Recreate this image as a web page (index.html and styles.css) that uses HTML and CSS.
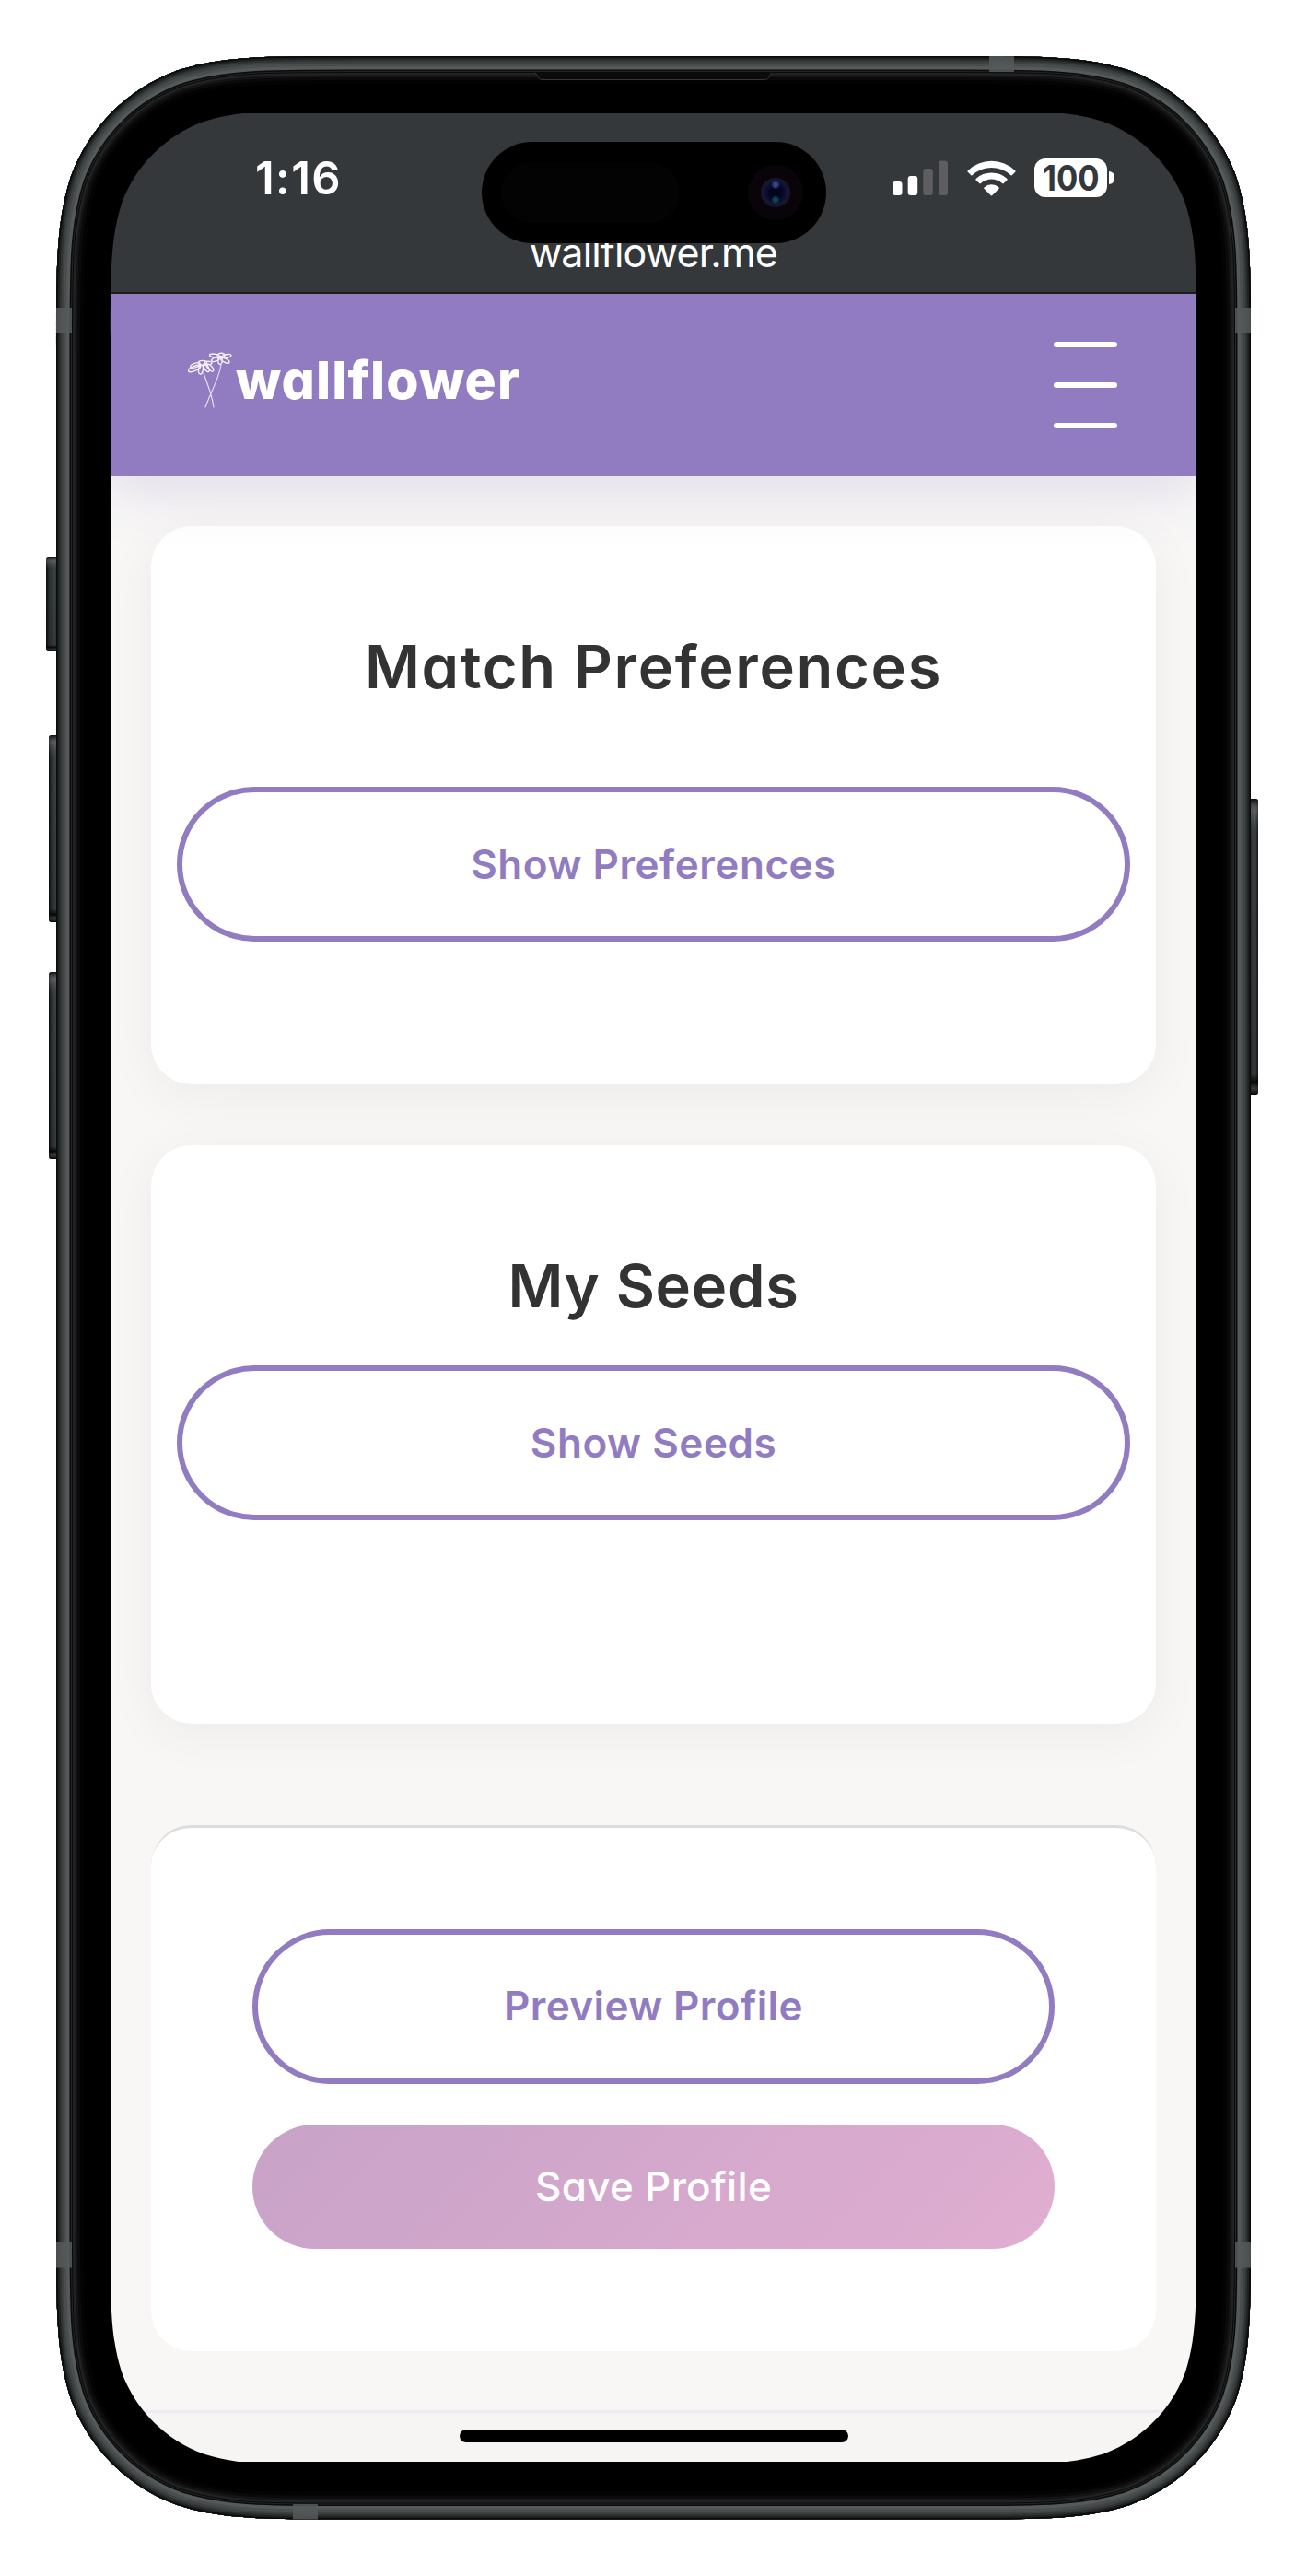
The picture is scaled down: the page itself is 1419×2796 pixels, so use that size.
FILE: index.html
```html
<!DOCTYPE html>
<html lang="en">
<head>
<meta charset="utf-8">
<title>wallflower</title>
<link rel="stylesheet" href="styles.css">
</head>
<body>
<div class="device">
  <div class="screen">
    <div class="status">
      <div class="status-row">
        <span class="time">1:16</span>
        <div class="indicators">
          <svg class="signal" width="60" height="38" viewBox="0 0 60 38">
            <g fill="#fff"><rect y="23" width="10.5" height="15" rx="3"/><rect x="16.7" y="17" width="10.5" height="21" rx="3"/></g>
            <g fill="#5e5e60"><rect x="33.3" y="9" width="10.5" height="29" rx="3"/><rect x="50" y="0.5" width="10" height="37.5" rx="3"/></g>
          </svg>
          <svg class="wifi" width="53" height="39" viewBox="0 0 53 39" fill="#fff">
            <path d="M.8 11.2A37 37 0 0 1 52.2 11.2Q53 12 52.2 12.8L48.7 16.2Q48 16.9 47.2 16.1A30.2 30.2 0 0 0 5.8 16.1Q5 16.9 4.3 16.2L.8 12.8Q0 12 .8 11.2Z"/>
            <path d="M9.6 20.1A24.6 24.6 0 0 1 43.4 20.1Q44.1 20.9 43.4 21.6L39.7 25.1Q38.9 25.8 38.1 25A17.2 17.2 0 0 0 14.9 25Q14.1 25.8 13.3 25.1L9.6 21.6Q8.9 20.9 9.6 20.1Z"/>
            <path d="M18.4 29.4A12.3 12.3 0 0 1 34.6 29.4Q35.2 30.1 34.6 30.8L27.4 38Q26.5 38.9 25.6 38L18.4 30.8Q17.8 30.1 18.4 29.4Z"/>
          </svg>
          <div class="battery"><span class="battery-level">100</span></div>
        </div>
      </div>
      <div class="address"><span>wallflower.me</span></div>
      <div class="island"><i class="sensor"></i><i class="camera"></i></div>
    </div>
    <header class="navbar">
      <div class="logo">
        <svg class="flowers" width="48" height="62" viewBox="0 0 48 62" fill="none" stroke="#fff" stroke-width="1.2" stroke-linecap="round">
          <g opacity=".75"><path d="M17 23C21 35 26 45 28 60M36 14C33 31 25 43 19 60"/></g>
          <g stroke-width="1.4" opacity=".9">
            <ellipse cx="7" cy="18" rx="7" ry="2.6" transform="rotate(-22 7 18)"/>
            <ellipse cx="8" cy="14.500" rx="5.500" ry="2.200" transform="rotate(-18 8 14.500)"/>
            <ellipse cx="14" cy="19" rx="2.400" ry="5" transform="rotate(8 14 19)"/>
            <ellipse cx="20" cy="17" rx="2.200" ry="5" transform="rotate(-30 20 17)"/>
            <ellipse cx="24" cy="17" rx="2.200" ry="5" transform="rotate(-42 24 17)"/>
            <ellipse cx="16" cy="12" rx="4.500" ry="2.600"/>
            <ellipse cx="22" cy="12" rx="4" ry="1.800"/>
            <ellipse cx="29" cy="4" rx="5.500" ry="1.800" transform="rotate(8 29 4)"/>
            <ellipse cx="30" cy="8" rx="4.500" ry="2" transform="rotate(-20 30 8)"/>
            <ellipse cx="35" cy="9" rx="2.200" ry="4.500"/>
            <ellipse cx="40" cy="9" rx="5.500" ry="2" transform="rotate(28 40 9)"/>
            <ellipse cx="42" cy="4.500" rx="5" ry="1.800" transform="rotate(-12 42 4.500)"/>
            <ellipse cx="36" cy="4" rx="4" ry="2.800"/>
          </g>
        </svg>
        <span class="wordmark">wallflower</span>
      </div>
      <div class="menu"><i></i><i></i><i></i></div>
    </header>
    <main class="content">
      <section class="card preferences">
        <h2>Match Preferences</h2>
        <a class="btn outline">Show Preferences</a>
      </section>
      <section class="card seeds">
        <h2>My Seeds</h2>
        <a class="btn outline">Show Seeds</a>
      </section>
      <section class="card actions">
        <a class="btn outline">Preview Profile</a>
        <a class="btn primary">Save Profile</a>
      </section>
    </main>
    <footer class="footer"><div class="home"></div></footer>
  </div>
  <svg class="frame" width="1419" height="2796" viewBox="0 0 1419 2796">
    <defs>
      <linearGradient id="key" x1="0" y1="0" x2="1" y2="0"><stop offset="0" stop-color="#0a0c0c"/><stop offset=".25" stop-color="#303536"/><stop offset=".7" stop-color="#43494a"/><stop offset="1" stop-color="#141717"/></linearGradient>
      <linearGradient id="keyshade" x1="0" y1="0" x2="0" y2="1"><stop offset="0" stop-color="#000" stop-opacity=".8"/><stop offset=".04" stop-color="#8a9292" stop-opacity=".35"/><stop offset=".14" stop-color="#000" stop-opacity=".1"/><stop offset=".93" stop-color="#000" stop-opacity=".2"/><stop offset=".96" stop-color="#000" stop-opacity=".9"/><stop offset=".98" stop-color="#333" stop-opacity=".6"/><stop offset="1" stop-color="#000"/></linearGradient>
      <path id="outer" d="M379 61H1040C1131.600 61 1177.400 61 1226.600 76.600C1280.500 96.200 1322.800 138.500 1342.400 192.400C1358 241.600 1358 287.400 1358 379V2416.600C1358 2508.200 1358 2554 1342.400 2603.200C1322.800 2657.100 1280.500 2699.400 1226.600 2719C1177.400 2734.600 1131.600 2734.600 1040 2734.600H379C287.400 2734.600 241.600 2734.600 192.400 2719C138.500 2699.400 96.200 2657.100 76.600 2603.200C61 2554 61 2508.200 61 2416.600V379C61 287.400 61 241.600 76.600 192.400C96.200 138.500 138.500 96.200 192.400 76.600C241.600 61 287.400 61 379 61Z"/>
      <clipPath id="body"><use href="#outer"/></clipPath>
    </defs>
    <g fill="url(#key)"><rect x="50" y="605" width="14" height="102" rx="3"/><rect x="53" y="798" width="11" height="203" rx="3"/><rect x="53" y="1055" width="11" height="203" rx="3"/><rect x="1355" y="867" width="11" height="321" rx="3"/></g>
    <g fill="url(#keyshade)"><rect x="50" y="605" width="14" height="102" rx="3"/><rect x="53" y="798" width="11" height="203" rx="3"/><rect x="53" y="1055" width="11" height="203" rx="3"/><rect x="1355" y="867" width="11" height="321" rx="3"/></g>
    <path class="bezel" fill-rule="evenodd" d="M379 61H1040C1131.600 61 1177.400 61 1226.600 76.600C1280.500 96.200 1322.800 138.500 1342.400 192.400C1358 241.600 1358 287.400 1358 379V2416.600C1358 2508.200 1358 2554 1342.400 2603.200C1322.800 2657.100 1280.500 2699.400 1226.600 2719C1177.400 2734.600 1131.600 2734.600 1040 2734.600H379C287.400 2734.600 241.600 2734.600 192.400 2719C138.500 2699.400 96.200 2657.100 76.600 2603.200C61 2554 61 2508.200 61 2416.600V379C61 287.400 61 241.600 76.600 192.400C96.200 138.500 138.500 96.200 192.400 76.600C241.600 61 287.400 61 379 61ZM364.600 120H1054.400C1124.800 120 1160 120 1198 132C1239.300 147.100 1271.900 179.700 1287 221C1299 259 1299 294.200 1299 364.600V2430.900C1299 2501.300 1299 2536.500 1287 2574.500C1271.900 2615.800 1239.300 2648.400 1198 2663.500C1160 2675.500 1124.800 2675.500 1054.400 2675.500H364.600C294.200 2675.500 259 2675.500 221 2663.500C179.700 2648.400 147.100 2615.800 132 2574.500C120 2536.500 120 2501.300 120 2430.900V364.600C120 294.200 120 259 132 221C147.100 179.700 179.700 147.100 221 132C259 120 294.200 120 364.600 120Z"/>
    <g clip-path="url(#body)" fill="none">
      <use href="#outer" stroke="#030303" stroke-width="60"/>
      <use href="#outer" stroke="#0a0a0a" stroke-width="52"/>
      <use href="#outer" stroke="#141414" stroke-width="46"/>
      <use href="#outer" stroke="#222" stroke-width="41"/>
      <use href="#outer" stroke="#090a0a" stroke-width="36"/>
      <use href="#outer" stroke="#222526" stroke-width="34"/>
      <use href="#outer" stroke="#0a0c0c" stroke-width="32"/>
      <use href="#outer" stroke="#54595a" stroke-width="29"/>
      <use href="#outer" stroke="#484d4e" stroke-width="22"/>
      <use href="#outer" stroke="#3c4142" stroke-width="16"/>
      <use href="#outer" stroke="#2d3233" stroke-width="11"/>
      <use href="#outer" stroke="#1d2122" stroke-width="7"/>
      <use href="#outer" stroke="#090b0b" stroke-width="3"/>
      <g fill="#555b5b" opacity=".85"><path d="M61 334h17v27H61zM1341 334h17v27h-17zM61 2434h17v27.500H61zM1341 2434h17v27.500h-17zM1074 61h27v17h-27zM318 2718h27v17h-27z"/></g>
      <path d="M581 79C584 80 583 86.500 589 86.500H830C836 86.500 835 80 838 79Z" fill="#0b0b0b"/>
      <path d="M581 79C584 80 583 86.500 589 86.500H830C836 86.500 835 80 838 79" stroke="#363636"/>
    </g>
  </svg>
</div>
</body>
</html>
```
FILE: styles.css
```css
* { box-sizing: border-box; }
body { margin: 0; background: #fff; font-family: Inter, "Liberation Sans", sans-serif; }
.device { position: relative; width: 1419px; height: 2796px; padding: 119px 120px; overflow: hidden; }
.screen { isolation: isolate; width: 1179px; height: 2557px; padding: 4px 0; background: #000; border-radius: 80px; overflow: hidden; display: flex; flex-direction: column; }
.frame { position: absolute; inset: 0; z-index: 1; }
.bezel { fill: #000; }

.status { position: relative; z-index: 2; height: 196px; background: #35383a; border-bottom: 2px solid #1c1b22; color: #fff; flex: none; }
.status-row { display: flex; justify-content: space-between; align-items: center; height: 84px; margin-top: 28px; padding: 0 97px 0 157px; }
.time { font-size: 49px; font-weight: 600; line-height: 60px; letter-spacing: 1.4px; padding-top: 1px; }
.indicators { display: flex; align-items: center; }
.wifi { margin-left: 21px; }
.battery { position: relative; width: 79px; height: 42px; margin-left: 20px; border-radius: 12px; background: #fff; color: #35383a; display: flex; justify-content: center; }
.battery::after { content: ""; position: absolute; left: 81px; top: 14px; width: 6px; height: 14px; border-radius: 0 6px 6px 0; background: #fff; }
.battery-level { font-size: 38px; font-weight: 700; line-height: 42px; transform: scaleX(.91); }
.address { position: absolute; left: 0; right: 0; top: 121px; font-size: 43px; line-height: 60px; letter-spacing: -.8px; text-align: center; }
.island { position: absolute; left: 403px; top: 31px; width: 374px; height: 110px; border-radius: 55px; background: #000; display: flex; align-items: center; justify-content: space-between; padding: 0 25px 0 21px; }
.sensor { width: 194px; height: 66px; border-radius: 33px; background: #030303; }
.camera { width: 60px; height: 60px; border-radius: 50%; background: radial-gradient(circle at 50% 36%, #3a4483 0 2px, transparent 5px), radial-gradient(circle at 50% 63%, #0e4350 0 2px, transparent 5px), radial-gradient(circle, #04051c 0 6px, #0a0e3d 11px, #141629 12px 15.500px, #08040a 16.500px); }

.navbar { position: relative; z-index: 1; display: flex; align-items: center; justify-content: space-between; height: 198px; flex: none; padding: 0 86px 0 84px; background: #927cc1; box-shadow: 0 11px 55px rgba(146, 124, 193, .25); }
.logo { display: flex; align-items: center; margin-top: -10px; }
.wordmark { margin-left: 4px; font-size: 57px; font-weight: 800; letter-spacing: 1.1px; color: #fff; font-feature-settings: "cv11"; line-height: 70px; }
.menu { width: 69px; display: flex; flex-direction: column; gap: 38px; }
.menu i { height: 6px; border-radius: 3px; background: #fff; }

.content { flex: 1; padding: 54px 44px 0; background: #f8f7f6; font-feature-settings: "cv11"; }
.card { background: #fff; border-radius: 44px; padding: 113px 28px 0; box-shadow: 0 11px 55px rgba(0, 0, 0, .05); }
.preferences { height: 606px; }
.seeds { height: 628px; margin-top: 66px; }
h2 { margin: 0; font-size: 65px; font-weight: 600; line-height: 80px; color: #333; text-align: center; }
.preferences h2 { letter-spacing: 1.7px; }
.seeds h2 { letter-spacing: .7px; }
.preferences .btn { margin-top: 90px; }
.seeds .btn { margin-top: 46px; }
.btn { display: flex; align-items: center; justify-content: center; font-size: 44px; font-weight: 600; letter-spacing: .55px; }
.outline { height: 168px; border: 6px solid #927cc1; border-radius: 84px; color: #927cc1; padding-bottom: 1px; }
.actions { height: 571px; margin-top: 110px; padding: 110px 110px 0; border-top: 3px solid #ddd; box-shadow: none; }
.actions .outline { letter-spacing: .4px; padding-bottom: 3px; }
.primary { height: 135px; margin-top: 44px; padding-bottom: 2px; border-radius: 68px; background: linear-gradient(135deg, #c8a2c8, #e0aed1); color: #fff; font-weight: 500; letter-spacing: .3px; }

.footer { flex: none; height: 56px; border-top: 3px solid #ececf0; background: #f6f5f4; padding-top: 18px; }
.home { width: 422px; height: 14px; margin: 0 auto; border-radius: 7px; background: #000; }
```
